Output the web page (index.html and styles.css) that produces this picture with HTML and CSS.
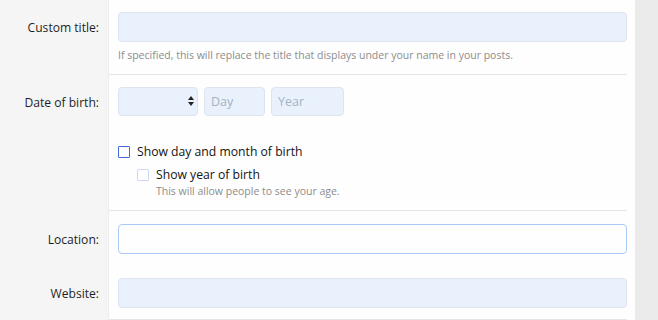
FILE: index.html
```html
<!DOCTYPE html>
<html lang="en">
<head>
  <meta charset="UTF-8">
  <title>Account details</title>
  <link rel="stylesheet" href="styles.css">
</head>
<body>
  <form class="block">
    <div class="form-row">
      <label class="row-label" for="customTitle">Custom title:</label>
      <div class="row-input sep">
        <input type="text" id="customTitle" class="input">
        <div class="hint">If specified, this will replace the title that displays under your name in your posts.</div>
      </div>
    </div>

    <div class="form-row">
      <label class="row-label">Date of birth:</label>
      <div class="row-input date-row">
        <div class="date-inputs">
          <div class="select-wrap">
            <select class="input select"><option></option></select>
            <svg class="select-arrow" width="6" height="10" viewBox="0 0 6 10"><path d="M3 0L6 4H0Z M3 10L0 6H6Z" fill="#222"/></svg>
          </div>
          <input type="text" class="input day" placeholder="Day">
          <input type="text" class="input year" placeholder="Year">
        </div>
        <div class="checks">
          <label class="check"><input type="checkbox" class="box active"> Show day and month of birth</label>
          <div class="check-sub">
            <label class="check"><input type="checkbox" class="box"> Show year of birth</label>
            <div class="hint sub-hint">This will allow people to see your age.</div>
          </div>
        </div>
      </div>
    </div>

    <div class="form-row">
      <label class="row-label loc-label" for="location">Location:</label>
      <div class="row-input top-pad">
        <input type="text" id="location" class="input focused">
      </div>
    </div>

    <div class="form-row">
      <label class="row-label" for="website">Website:</label>
      <div class="row-input bottom-line">
        <input type="text" id="website" class="input">
      </div>
    </div>
  </form>
</body>
</html>
```

FILE: styles.css
```css
* { box-sizing: border-box; }
body {
  margin: 0;
  background: #ebebeb;
  font-family: 'Open Sans', 'Noto Sans', sans-serif;
  font-size: 12px;
  color: #141414;
}
.block {
  width: 635px;
  min-height: 320px;
  background: #fefefe;
}
.form-row {
  display: grid;
  grid-template-columns: 109px 1fr;
}
.row-label {
  background: #f5f5f5;
  border-right: 1px solid #ededed;
  text-align: right;
  padding: 13px 9px 0 0;
  line-height: 30px;
  font-size: 12.1px;
  color: #1f1f1f;
}
.loc-label { padding-top: 14px; }
.row-input {
  padding: 12px 8px 12px 9px;
}
.sep {
  padding-bottom: 10px;
  border-bottom: 1px solid #e5e5e5;
  margin-right: 8px;
  padding-right: 0;
}
.top-pad { padding-top: 13px; }
.bottom-line {
  padding-bottom: 11px;
  padding-right: 0;
  margin-right: 8px;
  border-bottom: 1px solid #e5e5e5;
}
.input {
  display: block;
  width: 100%;
  height: 30px;
  padding: 0 6px;
  border: 1px solid #dde4ee;
  border-radius: 4px;
  background: #e8f1fc;
  font: inherit;
  font-size: 12.5px;
  color: #141414;
  outline: none;
}
.input::placeholder { color: #a6b2c2; }
.input.focused {
  background: #fefefe;
  border-color: #a9c9fa;
}
.hint {
  margin-top: 5px;
  font-size: 10.5px;
  line-height: 17px;
  color: #8c8c8c;
}
.date-row {
  padding-right: 0;
  padding-bottom: 11px;
  margin-right: 8px;
  border-bottom: 1px solid #e5e5e5;
}
.date-inputs {
  display: flex;
  gap: 6px;
}
.select-wrap {
  position: relative;
  width: 80px;
}
.select {
  height: 29px;
  -webkit-appearance: none;
  appearance: none;
}
.select-arrow {
  position: absolute;
  right: 4px;
  top: 9px;
}
.day { width: 61px; height: 29px; }
.year { width: 73px; height: 29px; }
.checks {
  margin-top: 26px;
}
.check {
  display: flex;
  align-items: center;
  gap: 7px;
  line-height: 20px;
  font-size: 12.2px;
  color: #141414;
}
.box {
  -webkit-appearance: none;
  appearance: none;
  width: 12px;
  height: 12px;
  margin: 0;
  border: 1px solid #cdd9ee;
  border-radius: 1px;
  background: #fefefe;
}
.box.active {
  border: 1.5px solid #3e70d8;
}
.check-sub {
  margin: 3px 0 0 19px;
}
.sub-hint {
  margin: -2px 0 0 19px;
  line-height: 16px;
}
```
